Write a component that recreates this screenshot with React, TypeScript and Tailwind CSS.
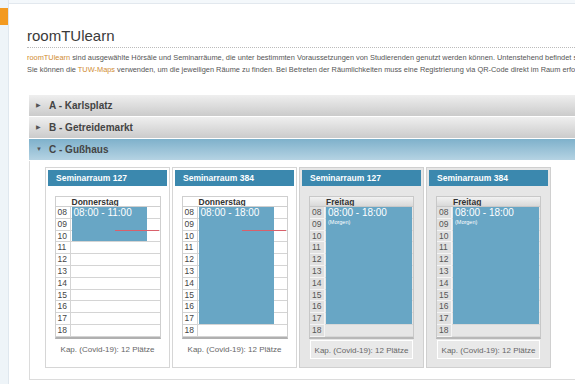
import React from 'react';

interface Room {
  name: string;
  day: string;
  start: number;
  end: number;
  label: string;
  note?: string;
  past: boolean;
}

const HOURS = ['08', '09', '10', '11', '12', '13', '14', '15', '16', '17', '18'];
const ROW = 11.8;

const rooms: Room[] = [
  { name: 'Seminarraum 127', day: 'Donnerstag', start: 0, end: 3, label: '08:00 - 11:00', past: false },
  { name: 'Seminarraum 384', day: 'Donnerstag', start: 0, end: 10, label: '08:00 - 18:00', past: false },
  { name: 'Seminarraum 127', day: 'Freitag', start: 0, end: 10, label: '08:00 - 18:00', note: '(Morgen)', past: true },
  { name: 'Seminarraum 384', day: 'Freitag', start: 0, end: 10, label: '08:00 - 18:00', note: '(Morgen)', past: true },
];

function RoomCard({ room }: { room: Room }) {
  const gray = room.past;
  return (
    <div
      className={`w-[125px] h-[201px] border p-[2px] flex flex-col ${
        gray ? 'bg-[#e6e6e6] border-[#d0d0d0]' : 'bg-white border-[#d6d6d6]'
      }`}
    >
      <div className="h-[16px] bg-[#3b88ae] text-white font-bold text-[8.5px] leading-[16px] pl-[8px]">
        {room.name}
      </div>
      <div className={`mt-[10px] mx-auto ${gray ? 'w-[105px]' : 'w-[106px]'}`}>
        {/* day header */}
        <div
          className={`flex h-[10px] border border-b-0 ${
            gray ? 'border-[#c8c8c8] bg-gradient-to-b from-[#f2f2f2] to-[#d9d9d9]' : 'border-[#cfcfcf] bg-white'
          }`}
        >
          <div className="w-[15px]" />
          <div className="flex-1 font-bold text-[8.5px] leading-[10px] text-[#333] pl-[1px]">{room.day}</div>
        </div>
        <div
          className={`relative border border-b-2 ${
            gray ? 'border-[#c8c8c8] border-b-[#b8b8b8]' : 'border-[#cfcfcf] border-b-[#b0b0b0]'
          }`}
        >
          {HOURS.map((h) => (
            <div key={h} className="flex" style={{ height: ROW }}>
              <div
                className={`w-[15px] text-[8.5px] pl-[2px] flex items-center border-b border-r ${
                  gray ? 'bg-[#e0e0e0] border-[#f4f4f4] text-[#555]' : 'bg-white border-[#d4d4d4] text-[#444]'
                }`}
              >
                {h}
              </div>
              <div className={`flex-1 border-b ${gray ? 'bg-[#e6e6e6] border-[#d8d8d8]' : 'bg-white border-[#d4d4d4]'}`} />
            </div>
          ))}
          {/* event block */}
          <div
            className="absolute left-[16px] bg-[#68a6c5] text-white px-[2px]"
            style={{
              top: room.start * ROW,
              height: (room.end - room.start) * ROW - 1,
              width: gray ? 86 : 75,
            }}
          >
            <div className="text-[10px] leading-[12px]">{room.label}</div>
            {room.note && <div className="text-[5.5px] leading-[8px] mt-[-1px]">{room.note}</div>}
          </div>
          {!gray && (
            <div className="absolute left-[59px] right-[1px] top-[23px] h-px bg-[#d9606b]" />
          )}
        </div>
      </div>
      <div className="mt-[1px] px-[8px]">
        <div
          className={`h-[19px] text-center text-[8px] leading-[19px] text-[#666] ${
            gray ? 'border border-white bg-[#e9e9e9]' : ''
          }`}
        >
          Kap. (Covid-19): 12 Plätze
        </div>
      </div>
    </div>
  );
}

function AccordionHeader({ label, open }: { label: string; open?: boolean }) {
  return (
    <div
      className={`h-[22px] flex items-center border-b border-white ${
        open
          ? 'bg-gradient-to-b from-[#7eb1cb] to-[#b5d3e3]'
          : 'bg-gradient-to-b from-[#efefef] to-[#cbcbcb]'
      }`}
    >
      <span className="w-[20px] pl-[7px] text-[6px] text-[#555]">{open ? '▼' : '▶'}</span>
      <span className="font-bold text-[10px] text-[#444]">{label}</span>
    </div>
  );
}

export default function App() {
  return (
    <div
      className="w-[575px] h-[384px] overflow-hidden bg-white flex"
      style={{ fontFamily: '"Liberation Sans", Arial, sans-serif' }}
    >
      {/* left strip */}
      <div className="w-[9px] shrink-0 bg-[#eef4f8] border-r border-[#dfe7ee] pt-[8px]">
        <div className="h-[17px] w-[8px] bg-[#f39a20]" />
      </div>

      <div className="flex-1 min-w-0 flex flex-col overflow-hidden">
        <div className="h-[4px] bg-[#f4f8fb] border-b border-[#e2e8ee]" />
        <div className="pl-[18px]">
          <h1 className="mt-[23px] text-[15px] leading-[18px] text-[#3a3a3a] border-b border-dotted border-[#bbb] pb-[2px]">
            roomTUlearn
          </h1>
          <div className="mt-[4px] text-[7.4px] leading-[12px] text-[#555] whitespace-nowrap">
            <p>
              <span className="text-[#d08c33]">roomTUlearn</span> sind ausgewählte Hörsäle und Seminarräume, die unter
              bestimmten Voraussetzungen von Studierenden genutzt werden können. Untenstehend befindet sich
            </p>
            <p>
              Sie können die <span className="text-[#d08c33]">TUW-Maps</span> verwenden, um die jeweiligen Räume zu
              finden. Bei Betreten der Räumlichkeiten muss eine Registrierung via QR-Code direkt im Raum erfolgen.
            </p>
          </div>

          <div className="mt-[19px] ml-[2px]">
            <AccordionHeader label="A - Karlsplatz" />
            <AccordionHeader label="B - Getreidemarkt" />
            <AccordionHeader label="C - Gußhaus" open />
            <div className="border-b border-l border-[#dcdcdc] pl-[15px] pt-[6px] h-[219px]">
              <div className="flex gap-[2px]">
                {rooms.map((r, i) => (
                  <RoomCard key={i} room={r} />
                ))}
              </div>
            </div>
          </div>
        </div>
      </div>
    </div>
  );
}
